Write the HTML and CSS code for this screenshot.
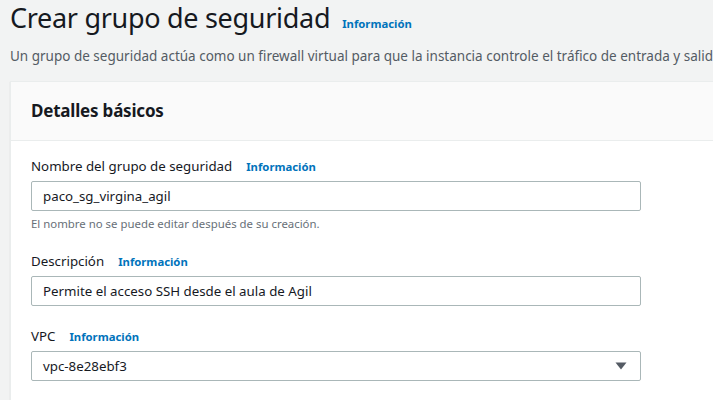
FILE: index.html
```html
<!DOCTYPE html>
<html lang="es">
<head>
<meta charset="utf-8">
<title>Crear grupo de seguridad</title>
<link rel="stylesheet" href="styles.css">
</head>
<body>
<div class="page">
  <header class="page-header">
    <h1 class="title">Crear grupo de seguridad</h1>
    <a class="info" href="#">Información</a>
  </header>
  <p class="lead">Un grupo de seguridad actúa como un firewall virtual para que la instancia controle el tráfico de entrada y salida de la red.</p>
  <section class="panel">
    <div class="panel-head"><h2>Detalles básicos</h2></div>
    <div class="panel-body">
      <div class="field">
        <div class="label-row"><span class="label">Nombre del grupo de seguridad</span><a class="info" href="#">Información</a></div>
        <div class="input">paco_sg_virgina_agil</div>
        <div class="hint">El nombre no se puede editar después de su creación.</div>
      </div>
      <div class="field">
        <div class="label-row"><span class="label">Descripción</span><a class="info" href="#">Información</a></div>
        <div class="input">Permite el acceso SSH desde el aula de Agil</div>
      </div>
      <div class="field">
        <div class="label-row"><span class="label">VPC</span><a class="info" href="#">Información</a></div>
        <div class="input select"><span>vpc-8e28ebf3</span>
          <svg class="caret" width="12" height="8" viewBox="0 0 12 8"><path d="M0.5 0.5 H11.5 L6 7.5 Z" fill="#545b64"/></svg>
        </div>
      </div>
    </div>
  </section>
</div>
</body>
</html>
```
FILE: styles.css
```css
html, body {
  margin: 0;
  padding: 0;
  background: #f2f3f3;
  overflow: hidden;
}
body {
  font-family: "Noto Sans", "Open Sans", sans-serif;
  color: #16191f;
}
.page {
  width: 1000px;
  padding: 0 0 0 10px;
}
.page-header {
  display: flex;
  align-items: baseline;
  gap: 12px;
  height: 38px;
}
.title {
  margin: 0;
  font-size: 27px;
  font-weight: 400;
  letter-spacing: -0.3px;
  line-height: 36px;
  color: #16191f;
}
.info {
  font-size: 11.3px;
  font-weight: 700;
  color: #0073bb;
  text-decoration: none;
}
.lead {
  margin: 7px 0 0;
  font-size: 13.5px;
  line-height: 22px;
  color: #545b64;
  white-space: nowrap;
}
.panel {
  margin-top: 14px;
  border: 1px solid #eaeded;
  background: #fff;
  box-shadow: 0 1px 1px rgba(0,28,36,0.15);
}
.panel-head {
  background: #fafafa;
  border-bottom: 1px solid #eaeded;
  padding: 16px 20px 0;
  height: 42px;
}
.panel-head h2 {
  margin: 0;
  font-size: 17px;
  letter-spacing: -0.2px;
  font-weight: 700;
  line-height: 26px;
}
.panel-body {
  padding: 15px 20px 20px;
  width: 610px;
}
.field + .field {
  margin-top: 18px;
}
.field + .field + .field {
  margin-top: 20px;
}
.label-row {
  display: flex;
  align-items: baseline;
  gap: 14px;
  height: 22px;
}
.label {
  font-size: 13.3px;
  line-height: 20px;
}
.input {
  margin-top: 3px;
  height: 28px;
  border: 1px solid #aab7b8;
  border-radius: 2px;
  padding: 0 11px;
  display: flex;
  align-items: center;
  font-size: 13.3px;
  background: #fff;
}
.select {
  justify-content: space-between;
}
.caret {
  margin-right: 2px;
}
.hint {
  margin-top: 4px;
  font-size: 11.4px;
  color: #687078;
  line-height: 18px;
}
```
